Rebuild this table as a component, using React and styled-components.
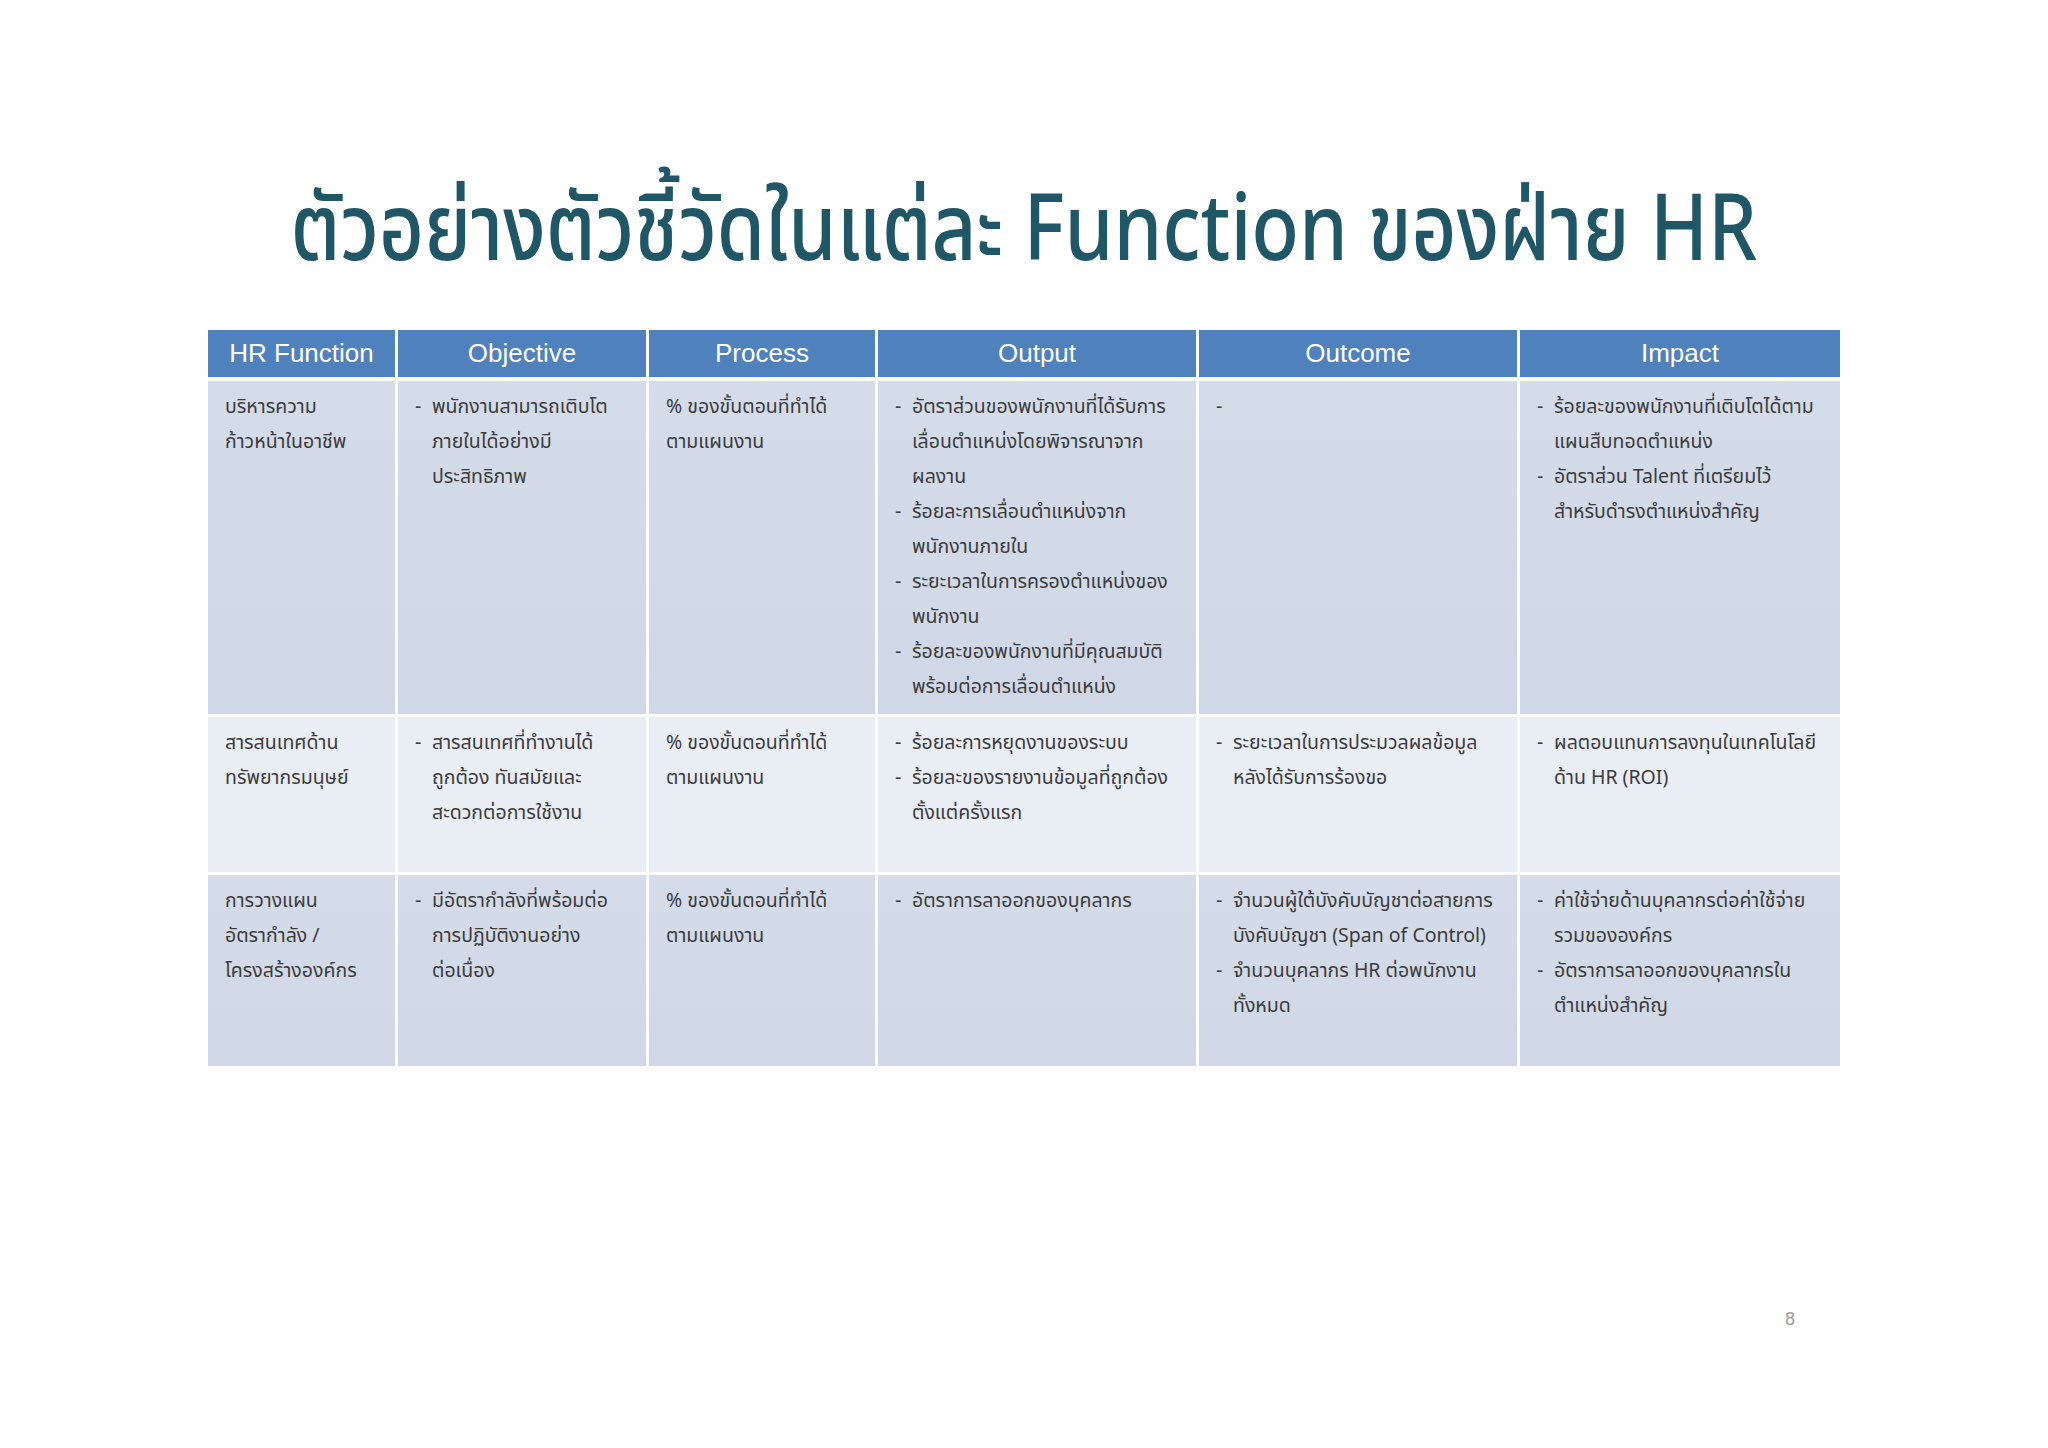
import React from 'react';
import styled, { createGlobalStyle } from 'styled-components';

const GlobalStyle = createGlobalStyle`
  html, body {
    margin: 0;
    padding: 0;
    background: #fefefe;
  }
  body {
    font-family: "Noto Sans Thai", "Noto Sans", "DejaVu Sans", sans-serif;
  }
`;

const columns = ['HR Function', 'Objective', 'Process', 'Output', 'Outcome', 'Impact'];

const process = { plain: ['% ของขั้นตอนที่ทำได้', 'ตามแผนงาน'] };

// each cell: plain lines, or a list of dashed items (each item = its own lines)
const rows = [
  {
    tone: 'dark',
    cells: [
      { plain: ['บริหารความ', 'ก้าวหน้าในอาชีพ'] },
      { items: [['พนักงานสามารถเติบโต', 'ภายในได้อย่างมี', 'ประสิทธิภาพ']] },
      process,
      {
        items: [
          ['อัตราส่วนของพนักงานที่ได้รับการ', 'เลื่อนตำแหน่งโดยพิจารณาจาก', 'ผลงาน'],
          ['ร้อยละการเลื่อนตำแหน่งจาก', 'พนักงานภายใน'],
          ['ระยะเวลาในการครองตำแหน่งของ', 'พนักงาน'],
          ['ร้อยละของพนักงานที่มีคุณสมบัติ', 'พร้อมต่อการเลื่อนตำแหน่ง'],
        ],
      },
      { plain: ['-'] },
      {
        items: [
          ['ร้อยละของพนักงานที่เติบโตได้ตาม', 'แผนสืบทอดตำแหน่ง'],
          ['อัตราส่วน Talent ที่เตรียมไว้', 'สำหรับดำรงตำแหน่งสำคัญ'],
        ],
      },
    ],
  },
  {
    tone: 'light',
    cells: [
      { plain: ['สารสนเทศด้าน', 'ทรัพยากรมนุษย์'] },
      { items: [['สารสนเทศที่ทำงานได้', 'ถูกต้อง ทันสมัยและ', 'สะดวกต่อการใช้งาน']] },
      process,
      {
        items: [
          ['ร้อยละการหยุดงานของระบบ'],
          ['ร้อยละของรายงานข้อมูลที่ถูกต้อง', 'ตั้งแต่ครั้งแรก'],
        ],
      },
      { items: [['ระยะเวลาในการประมวลผลข้อมูล', 'หลังได้รับการร้องขอ']] },
      { items: [['ผลตอบแทนการลงทุนในเทคโนโลยี', 'ด้าน HR (ROI)']] },
    ],
  },
  {
    tone: 'dark',
    cells: [
      { plain: ['การวางแผน', 'อัตรากำลัง /', 'โครงสร้างองค์กร'] },
      { items: [['มีอัตรากำลังที่พร้อมต่อ', 'การปฏิบัติงานอย่าง', 'ต่อเนื่อง']] },
      process,
      { items: [['อัตราการลาออกของบุคลากร']] },
      {
        items: [
          ['จำนวนผู้ใต้บังคับบัญชาต่อสายการ', 'บังคับบัญชา (Span of Control)'],
          ['จำนวนบุคลากร HR ต่อพนักงาน', 'ทั้งหมด'],
        ],
      },
      {
        items: [
          ['ค่าใช้จ่ายด้านบุคลากรต่อค่าใช้จ่าย', 'รวมขององค์กร'],
          ['อัตราการลาออกของบุคลากรใน', 'ตำแหน่งสำคัญ'],
        ],
      },
    ],
  },
];

const Page = styled.div`
  width: 2048px;
  height: 1448px;
  display: flex;
  flex-direction: column;
  align-items: center;
  box-sizing: border-box;
  padding-top: 172px;
`;

const Title = styled.h1`
  margin: 0;
  font-family: "Noto Sans Thai", "Noto Sans", "DejaVu Sans", sans-serif;
  font-size: 92px;
  font-weight: 500;
  line-height: 120px;
  color: #1f5766;
  white-space: nowrap;
  transform: scaleX(0.845);
`;

const Table = styled.div`
  margin-top: 38px;
  width: 1632px;
  display: grid;
  grid-template-columns: 187px 248px 226px 318px 318px 320px;
  grid-template-rows: 48px 333px 155px 191px;
  column-gap: 3px;
  row-gap: 3px;
`;

const HeadCell = styled.div`
  background: #4f81bd;
  color: #ffffff;
  display: flex;
  align-items: center;
  justify-content: center;
  font-family: "Liberation Sans Narrow", "Liberation Sans", sans-serif;
  font-size: 26px;
  margin-bottom: 1px;
`;

const Cell = styled.div`
  background: ${(p) =>
    p.$tone === 'dark'
      ? 'linear-gradient(180deg, #d4dce9 0%, #d0d8e7 100%)'
      : '#e9edf4'};
  padding: 9px 10px 0 17px;
  font-size: 19.5px;
  line-height: 35px;
  color: #3c3c3c;
`;

const Line = styled.div`
  white-space: nowrap;
`;

const List = styled.ul`
  margin: 0;
  padding: 0;
  list-style: none;
`;

const Item = styled.li`
  position: relative;
  padding-left: 17px;

  &::before {
    content: '-';
    position: absolute;
    left: 0;
    top: 0;
  }
`;

const Footer = styled.div`
  width: 1632px;
  display: flex;
  justify-content: flex-end;
  margin-top: 243px;
  padding-right: 45px;
  box-sizing: border-box;
  font-family: "Liberation Sans", sans-serif;
  font-size: 18px;
  color: #9d9d9d;
`;

const BodyCell = ({ cell, tone }) => (
  <Cell $tone={tone}>
    {cell.plain && cell.plain.map((t, i) => <Line key={i}>{t}</Line>)}
    {cell.items && (
      <List>
        {cell.items.map((lines, i) => (
          <Item key={i}>
            {lines.map((t, j) => (
              <Line key={j}>{t}</Line>
            ))}
          </Item>
        ))}
      </List>
    )}
  </Cell>
);

export default function App() {
  return (
    <>
      <GlobalStyle />
      <Page>
        <Title>ตัวอย่างตัวชี้วัดในแต่ละ Function ของฝ่าย HR</Title>
        <Table>
          {columns.map((c) => (
            <HeadCell key={c}>{c}</HeadCell>
          ))}
          {rows.map((row, r) =>
            row.cells.map((cell, i) => <BodyCell key={`${r}-${i}`} cell={cell} tone={row.tone} />)
          )}
        </Table>
        <Footer>8</Footer>
      </Page>
    </>
  );
}
